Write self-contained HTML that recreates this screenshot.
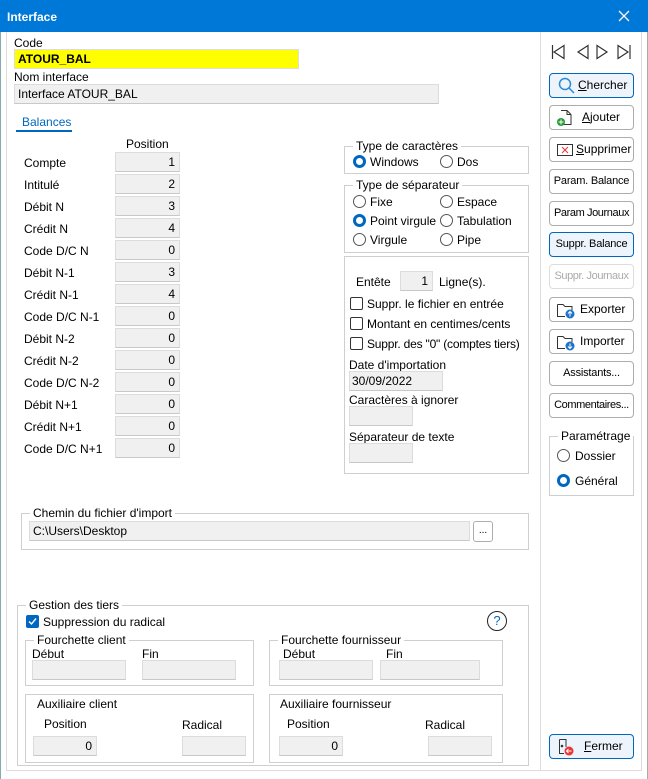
<!DOCTYPE html>
<html><head><meta charset="utf-8"><style>
*{box-sizing:border-box;margin:0;padding:0}
body{width:648px;height:779px;background:#fff;font-family:"Liberation Sans",sans-serif;font-size:12px;color:#000;position:relative;overflow:hidden}
.a{position:absolute;white-space:nowrap}
.in{position:absolute;background:#f0f0f0;border:1px solid #dcdcdc;border-bottom-color:#c8c8c8;height:20px;line-height:18px;padding:0 4px;text-align:right}
.fs{position:absolute;border:1px solid #cfcfcf}
.lg{position:absolute;background:#fff;padding:0 3px;top:-8px;left:6px;line-height:14px}
.btn{position:absolute;left:549px;width:85px;height:25px;border:1px solid #adadad;border-radius:4px;background:#fff;text-align:center;line-height:23px;font-size:11px;white-space:nowrap;overflow:hidden;letter-spacing:-0.2px}
.btn.f{border-color:#0067c0;background:#eef4fc}
.btn svg{position:absolute;left:6px;top:3px}
.btn.i{text-align:left;font-size:12px;letter-spacing:0}
.rd{position:absolute;width:13px;height:13px;border:1px solid #555;border-radius:50%;background:#fff}
.rd.on{border:3.5px solid #0067c0}
.cb{position:absolute;width:13px;height:13px;border:1px solid #333;border-radius:2px;background:#fff}
</style></head><body>
<div class="a" style="left:0;top:0;width:648px;height:32px;background:#0078d7"></div>
<div class="a" style="left:7px;top:10px;color:#fff;font-weight:bold;font-size:12px">Interface</div>
<svg class="a" style="left:618px;top:10px" width="12" height="12"><path d="M1 1L11 11M11 1L1 11" stroke="#fff" stroke-width="1.3"/></svg>
<div class="a" style="left:0;top:32px;width:1px;height:747px;background:#8aa"></div>
<div class="a" style="left:647px;top:32px;width:1px;height:747px;background:#aaa"></div>
<div class="a" style="left:6px;top:32px;width:1px;height:738px;background:#ddd"></div>
<div class="a" style="left:540px;top:32px;width:1px;height:738px;background:#ddd"></div>
<div class="a" style="left:641px;top:32px;width:1px;height:738px;background:#ddd"></div>
<div class="a" style="left:6px;top:770px;width:636px;height:1px;background:#ddd"></div>

<div class="a" style="left:14px;top:36px">Code</div>
<div class="a" style="left:14px;top:49px;width:285px;height:20px;background:#ff0;border:1px solid #ddd;font-weight:bold;padding-left:3px;line-height:18px">ATOUR_BAL</div>
<div class="a" style="left:14px;top:70px">Nom interface</div>
<div class="in" style="left:14px;top:84px;width:425px;text-align:left;padding-left:3px">Interface ATOUR_BAL</div>
<div class="a" style="left:22px;top:115px;color:#0067c0">Balances</div>
<div class="a" style="left:16px;top:130px;width:56px;height:2px;background:#0067c0"></div>
<div class="a" style="left:126px;top:137px">Position</div>

<div class="a" style="left:24px;top:152px;line-height:22px">Compte<br>Intitulé<br>Débit N<br>Crédit N<br>Code D/C N<br>Débit N-1<br>Crédit N-1<br>Code D/C N-1<br>Débit N-2<br>Crédit N-2<br>Code D/C N-2<br>Débit N+1<br>Crédit N+1<br>Code D/C N+1</div>
<div class="in" style="left:115px;top:152px;width:65px">1</div>
<div class="in" style="left:115px;top:174px;width:65px">2</div>
<div class="in" style="left:115px;top:196px;width:65px">3</div>
<div class="in" style="left:115px;top:218px;width:65px">4</div>
<div class="in" style="left:115px;top:240px;width:65px">0</div>
<div class="in" style="left:115px;top:262px;width:65px">3</div>
<div class="in" style="left:115px;top:284px;width:65px">4</div>
<div class="in" style="left:115px;top:306px;width:65px">0</div>
<div class="in" style="left:115px;top:328px;width:65px">0</div>
<div class="in" style="left:115px;top:350px;width:65px">0</div>
<div class="in" style="left:115px;top:372px;width:65px">0</div>
<div class="in" style="left:115px;top:394px;width:65px">0</div>
<div class="in" style="left:115px;top:416px;width:65px">0</div>
<div class="in" style="left:115px;top:438px;width:65px">0</div>

<div class="fs" style="left:344px;top:146px;width:185px;height:28px"><div class="lg" style="left:8px">Type de caractères</div></div>
<div class="rd on" style="left:353px;top:155px"></div><div class="a" style="left:370px;top:155px">Windows</div>
<div class="rd" style="left:440px;top:155px"></div><div class="a" style="left:457px;top:155px">Dos</div>

<div class="fs" style="left:344px;top:185px;width:185px;height:68px"><div class="lg" style="left:8px">Type de séparateur</div></div>
<div class="rd" style="left:353px;top:195px"></div><div class="a" style="left:370px;top:195px">Fixe</div>
<div class="rd" style="left:440px;top:195px"></div><div class="a" style="left:457px;top:195px">Espace</div>
<div class="rd on" style="left:353px;top:214px"></div><div class="a" style="left:370px;top:214px">Point virgule</div>
<div class="rd" style="left:440px;top:214px"></div><div class="a" style="left:457px;top:214px">Tabulation</div>
<div class="rd" style="left:353px;top:233px"></div><div class="a" style="left:370px;top:233px">Virgule</div>
<div class="rd" style="left:440px;top:233px"></div><div class="a" style="left:457px;top:233px">Pipe</div>

<div class="fs" style="left:344px;top:256px;width:185px;height:218px"></div>
<div class="a" style="left:356px;top:275px">Entête</div>
<div class="in" style="left:400px;top:271px;width:33px">1</div>
<div class="a" style="left:439px;top:275px">Ligne(s).</div>
<div class="cb" style="left:350px;top:297px"></div><div class="a" style="left:367px;top:297px">Suppr. le fichier en entrée</div>
<div class="cb" style="left:350px;top:317px"></div><div class="a" style="left:367px;top:317px">Montant en centimes/cents</div>
<div class="cb" style="left:350px;top:337px"></div><div class="a" style="left:367px;top:337px;letter-spacing:-0.2px">Suppr. des "0" (comptes tiers)</div>
<div class="a" style="left:349px;top:358px">Date d'importation</div>
<div class="in" style="left:349px;top:371px;width:94px;text-align:left;padding-left:2px">30/09/2022</div>
<div class="a" style="left:349px;top:393px">Caractères à ignorer</div>
<div class="in" style="left:349px;top:406px;width:64px"></div>
<div class="a" style="left:349px;top:430px">Séparateur de texte</div>
<div class="in" style="left:349px;top:443px;width:64px"></div>

<div class="fs" style="left:21px;top:513px;width:508px;height:37px"><div class="lg" style="left:8px">Chemin du fichier d'import</div></div>
<div class="in" style="left:29px;top:521px;width:441px;text-align:left;padding-left:3px">C:\Users\Desktop</div>
<div class="a" style="left:473px;top:521px;width:20px;height:21px;border:1px solid #adadad;border-radius:3px;text-align:center;line-height:18px;font-size:10px">...</div>

<div class="fs" style="left:17px;top:605px;width:512px;height:161px"><div class="lg" style="left:8px">Gestion des tiers</div></div>
<div class="a" style="left:26px;top:615px;width:13px;height:13px;background:#0067c0;border-radius:2px"><svg width="13" height="13" style="position:absolute;left:0;top:0"><path d="M3 6.5L5.5 9L10 3.5" stroke="#fff" stroke-width="1.4" fill="none"/></svg></div>
<div class="a" style="left:43px;top:615px">Suppression du radical</div>
<div class="a" style="left:487px;top:611px;width:20px;height:20px;border:1.5px solid #222;border-radius:50%;text-align:center;line-height:17px;color:#0067c0;font-size:13px">?</div>

<div class="fs" style="left:25px;top:640px;width:229px;height:46px"><div class="lg" style="left:8px">Fourchette client</div></div>
<div class="a" style="left:32px;top:647px">Début</div><div class="a" style="left:142px;top:647px">Fin</div>
<div class="in" style="left:32px;top:660px;width:94px"></div><div class="in" style="left:142px;top:660px;width:94px"></div>
<div class="fs" style="left:269px;top:640px;width:234px;height:46px"><div class="lg" style="left:8px">Fourchette fournisseur</div></div>
<div class="a" style="left:283px;top:647px">Début</div><div class="a" style="left:386px;top:647px">Fin</div>
<div class="in" style="left:279px;top:660px;width:94px"></div><div class="in" style="left:380px;top:660px;width:100px"></div>

<div class="fs" style="left:25px;top:694px;width:229px;height:69px"></div>
<div class="a" style="left:37px;top:697px">Auxiliaire client</div>
<div class="a" style="left:44px;top:717px">Position</div><div class="a" style="left:182px;top:718px">Radical</div>
<div class="in" style="left:33px;top:736px;width:64px">0</div><div class="in" style="left:182px;top:736px;width:64px"></div>
<div class="fs" style="left:269px;top:694px;width:234px;height:69px"></div>
<div class="a" style="left:280px;top:697px">Auxiliaire fournisseur</div>
<div class="a" style="left:287px;top:717px">Position</div><div class="a" style="left:425px;top:718px">Radical</div>
<div class="in" style="left:279px;top:736px;width:64px">0</div><div class="in" style="left:428px;top:736px;width:64px"></div>

<svg class="a" style="left:551px;top:44px" width="80" height="16" fill="none" stroke="#333" stroke-width="1.2">
<path d="M1.5 1V15M13 1.5L3 8L13 14.5Z"/>
<path d="M37 1.5L27 8L37 14.5Z"/>
<path d="M46 1.5L56 8L46 14.5Z"/>
<path d="M79 1V15M67 1.5L77 8L67 14.5Z"/>
</svg>
<div class="btn f i" style="top:73px;padding-left:28px"><svg width="20" height="18" fill="none" stroke="#2a8ad6" stroke-width="1.5"><circle cx="9" cy="7" r="5.5"/><path d="M13 11L18 16"/></svg><u>C</u>hercher</div>
<div class="btn i" style="top:105px;padding-left:32px"><svg width="18" height="18" fill="none" stroke="#333"><path d="M5 1.5H11L15 5.5V15.5H7"/><path d="M11 1.5V5.5H15"/><circle cx="5" cy="13" r="4" fill="#2a9a3a" stroke="none"/><path d="M5 10.5V15.5M2.5 13H7.5" stroke="#fff"/></svg><u>A</u>jouter</div>
<div class="btn i" style="top:137px;padding-left:26px"><svg width="18" height="18" fill="none"><rect x="1.5" y="3.5" width="15" height="11" stroke="#333"/><path d="M6 6L12 12M12 6L6 12" stroke="#e33"/></svg><u>S</u>upprimer</div>
<div class="btn" style="top:169px">Param. Balance</div>
<div class="btn" style="top:201px;letter-spacing:-0.4px">Param Journaux</div>
<div class="btn f" style="top:232px">Suppr. Balance</div>
<div class="btn" style="top:264px;color:#aaa;border-color:#ddd;letter-spacing:-0.4px">Suppr. Journaux</div>
<div class="btn i" style="top:297px;padding-left:30px"><svg width="20" height="18" fill="none" stroke="#333"><path d="M1.5 3.5H7L9 5.5H16V9M1.5 3.5V15.5H9"/><circle cx="14" cy="13" r="4.5" fill="#1f74c8" stroke="none"/><path d="M14 15.5V10.5M12 12.5L14 10.5L16 12.5" stroke="#fff"/></svg>Exporter</div>
<div class="btn i" style="top:329px;padding-left:30px"><svg width="20" height="18" fill="none" stroke="#333"><path d="M1.5 3.5H7L9 5.5H16V9M1.5 3.5V15.5H9"/><circle cx="14" cy="13" r="4.5" fill="#1f74c8" stroke="none"/><path d="M14 10.5V15.5M12 13.5L14 15.5L16 13.5" stroke="#fff"/></svg>Importer</div>
<div class="btn" style="top:361px">Assistants...</div>
<div class="btn" style="top:393px;letter-spacing:-0.4px">Commentaires...</div>
<div class="fs" style="left:549px;top:436px;width:85px;height:60px"><div class="lg" style="left:8px">Paramétrage</div></div>
<div class="rd" style="left:557px;top:449px"></div><div class="a" style="left:575px;top:449px">Dossier</div>
<div class="rd on" style="left:557px;top:474px"></div><div class="a" style="left:575px;top:474px">Général</div>
<div class="btn f i" style="top:734px;padding-left:34px"><svg width="20" height="18" fill="none" stroke="#333"><path d="M3.5 1.5H10V9M3.5 1.5V15.5H8"/><circle cx="6" cy="8" r="0.8" fill="#333"/><circle cx="13" cy="13" r="4.5" fill="#e33" stroke="none"/><path d="M15.5 13H10.5M12.5 11L10.5 13L12.5 15" stroke="#fff"/></svg><u>F</u>ermer</div>
</body></html>
